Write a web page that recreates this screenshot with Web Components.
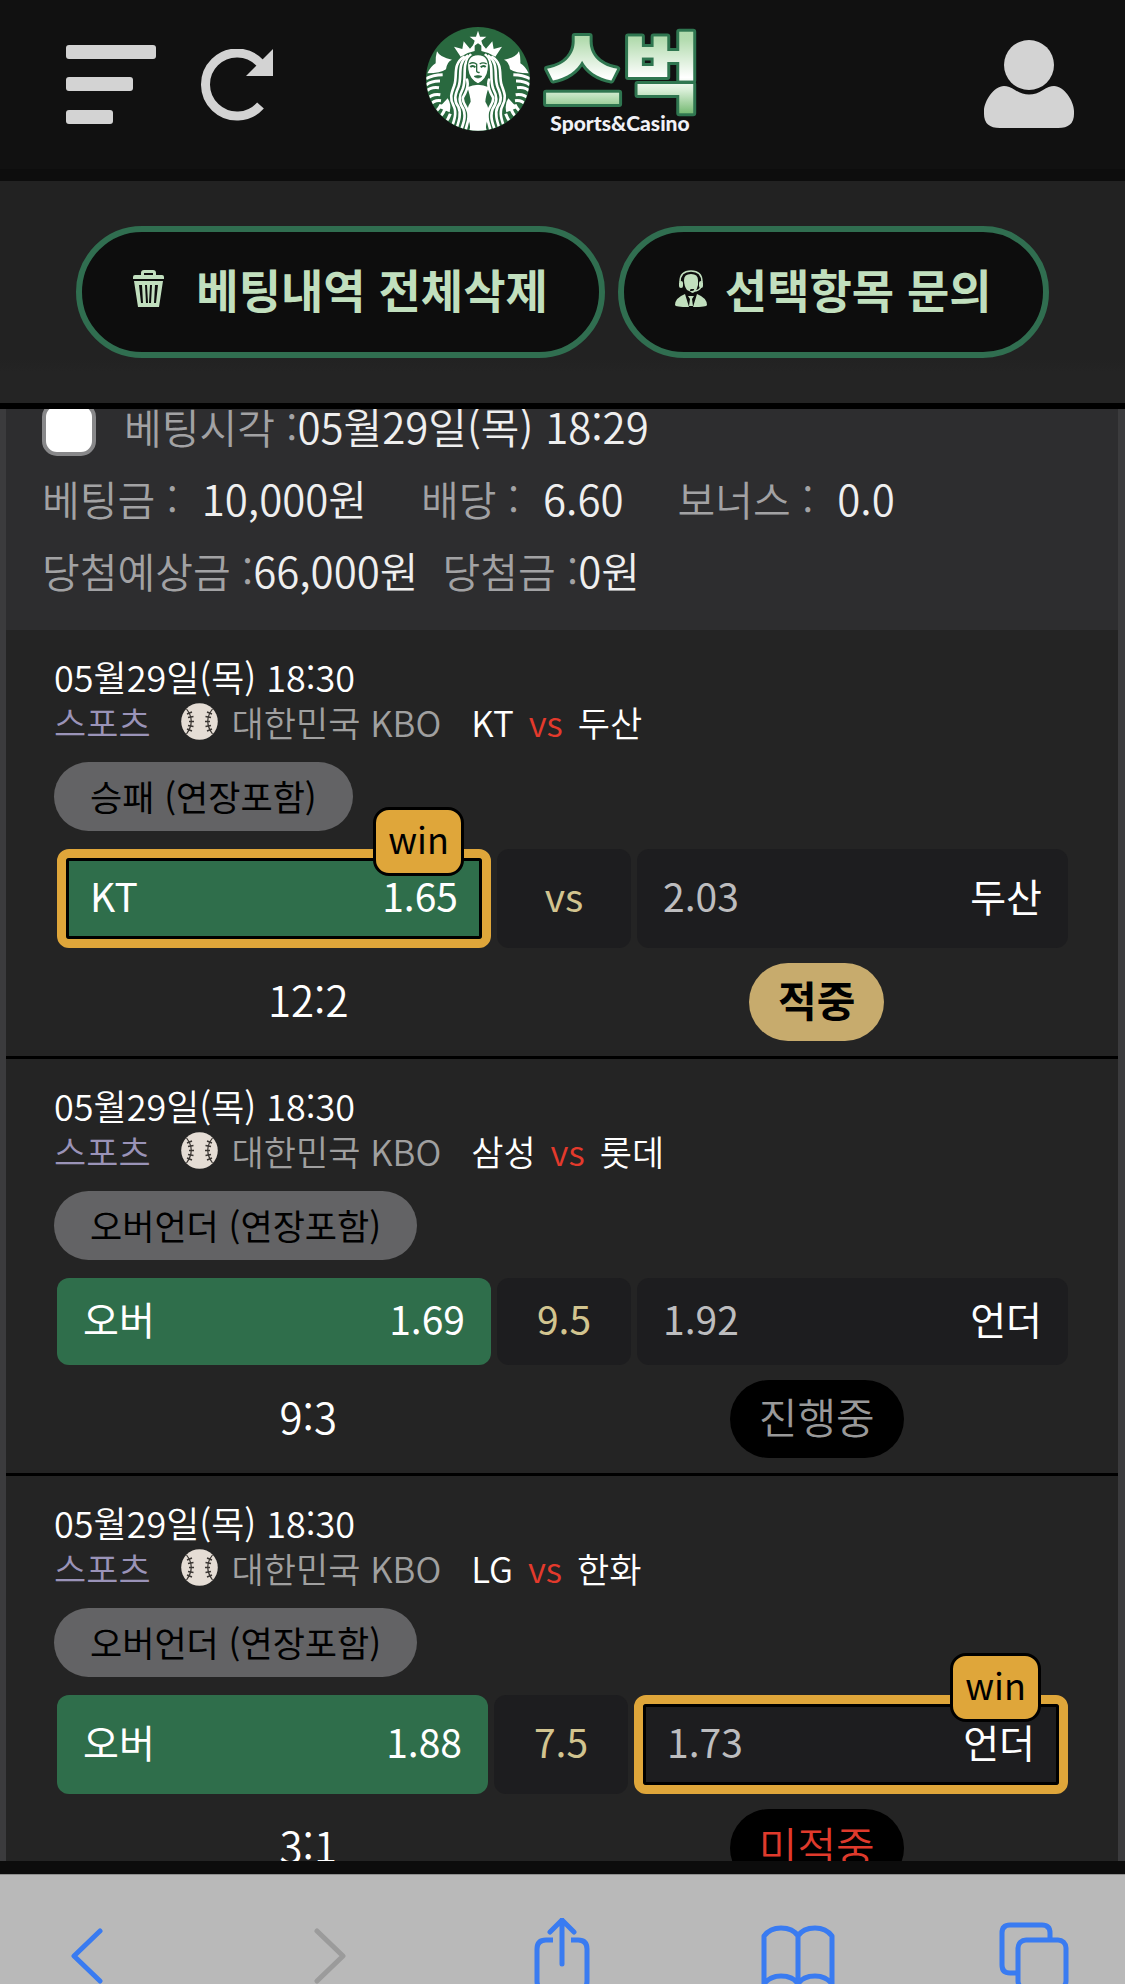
<!DOCTYPE html>
<html lang="ko">
<head>
<meta charset="utf-8">
<meta name="viewport" content="width=device-width, initial-scale=1">
<title>베팅내역</title>
<style>
  body { margin: 0; background: #222; color: #fff; font-family: "Noto Sans CJK KR", "Liberation Sans", sans-serif; }
</style>
</head>
<body>
<bet-app></bet-app>

<template id="t-app">
  <style>
    :host { display: flex; flex-direction: column; height: 100vh; overflow: hidden; background: #222; }
    .actions { display: flex; justify-content: center; gap: 13px; padding: 45px 0; border-bottom: 6px solid #000; background: linear-gradient(#222 0 80%, #242424 86%); flex: none; }
    main { flex: 1; min-height: 0; overflow: hidden; background: #3b3b3d; padding: 0 7px 0 6px; }
  </style>
  <app-header></app-header>
  <div class="actions">
    <pill-button icon="trash">베팅내역 전체삭제</pill-button>
    <pill-button icon="agent">선택항목 문의</pill-button>
  </div>
  <main>
    <bet-summary></bet-summary>
    <bet-match market="승패 (연장포함)" score="12:2" state="hit" status="적중" pick="home" winner="home"
      left="KT" left-odds="1.65" line="vs" right-odds="2.03" right="두산">
      <span slot="home">KT</span><span slot="away">두산</span>
    </bet-match>
    <bet-match market="오버언더 (연장포함)" score="9:3" state="open" status="진행중" pick="home"
      left="오버" left-odds="1.69" line="9.5" right-odds="1.92" right="언더">
      <span slot="home">삼성</span><span slot="away">롯데</span>
    </bet-match>
    <bet-match market="오버언더 (연장포함)" score="3:1" state="miss" status="미적중" pick="home" winner="away"
      left="오버" left-odds="1.88" line="7.5" right-odds="1.73" right="언더">
      <span slot="home">LG</span><span slot="away">한화</span>
    </bet-match>
  </main>
  <browser-bar></browser-bar>
</template>

<template id="t-header">
  <style>
    :host { display: grid; grid-template-columns: 1fr auto 1fr; align-items: center; flex: none; box-sizing: border-box; height: 181px; padding: 0 50px; background: #111; border-bottom: 12px solid #0d0d0d; }
    button { border: 0; background: none; padding: 0; display: block; }
    svg { display: block; }
    .tools { display: flex; gap: 45px; align-items: center; padding-left: 16px; }
    .user { justify-self: end; }
    .brand { display: flex; gap: 11px; align-items: center; text-decoration: none; padding-bottom: 11px; }
  </style>
  <div class="tools">
    <button aria-label="메뉴"><svg width="90" height="80" viewBox="0 0 90 80" fill="#d3d3d3"><rect width="90" height="14" rx="3"/><rect y="32" width="67" height="14" rx="3"/><rect y="65" width="47" height="14" rx="3"/></svg></button>
    <button aria-label="새로고침"><svg width="72" height="72" viewBox="0 0 72 72"><path d="M59.500 56.500A31.500 31.500 0 1 1 59 14" fill="none" stroke="#d3d3d3" stroke-width="9"/><path d="M72 0V27H45Z" fill="#d3d3d3"/></svg></button>
  </div>
  <a class="brand" href="#" aria-label="스벅">
    <svg width="104" height="104" viewBox="0 0 312 312">
      <defs>
        <clipPath id="disc"><circle cx="156" cy="156" r="155"/></clipPath>
        <g id="half">
          <path fill="#fff" d="M146 72Q124 76 104 89L84 59L109 66L113 43L132 65L146 49Z"/>
          <path fill="#fff" d="M33 73Q42 92 78 98Q63 104 60 127Q44 139 4 139Q14 118 29 109Q28 89 33 73Z"/>
          <g fill="none" stroke="#fff" stroke-width="9">
            <path d="M0 155Q20 144 50 143"/><path d="M0 174Q17 161 42 162"/><path d="M-2 196Q12 178 39 182"/><path d="M5 215Q18 199 43 203"/><path d="M12 235Q24 218 45 221"/>
            <path d="M25 258Q42 242 45 232" /><path d="M39 274Q52 260 58 245"/><path d="M57 289Q68 274 73 260"/>
          </g>
          <path fill="#fff" d="M65 214Q51 230 38 242L71 256Q77 231 65 214Z"/>
          <g fill="none" stroke="#fff" stroke-width="8" stroke-linecap="round">
            <path d="M113 90C79 112 95 146 85 175C76 199 70 214 83 237C93 257 85 280 77 302"/>
            <path d="M124 87C91 112 110 148 97 181C87 204 83 220 97 239C107 260 98 285 91 306"/>
            <path d="M133 84C104 114 124 152 110 186C97 211 99 226 112 246C121 268 112 290 104 312"/>
            <path d="M123 158C130 178 120 196 111 211C106 226 127 243 128 263C129 284 119 298 119 312"/>
          </g>
        </g>
      </defs>
      <circle cx="156" cy="156" r="156" fill="#29693f"/>
      <g clip-path="url(#disc)">
        <use href="#half"/><use href="#half" transform="translate(312 0) scale(-1 1)"/>
        <path fill="#fff" d="M156 11L162 29L181 29L166 41L172 60L156 49L140 60L146 41L131 29L150 29Z"/>
        <path fill="#fff" d="M124 181Q156 165 188 181Q179 208 178 224Q195 248 183 283Q177 301 183 312H129Q135 301 129 283Q117 248 134 224Q133 208 124 181Z"/>
        <path fill="#fff" stroke="#29693f" stroke-width="4" d="M156 83C183 83 190 102 187 127C184 151 171 164 156 171C141 164 128 151 125 127C122 102 129 83 156 83Z"/>
        <g fill="none" stroke="#29693f" stroke-width="4"><path d="M130 111Q142 103 152 112V133Q154 138 161 136M161 111Q171 104 182 111"/><path d="M133 120Q141 114 148 121M164 121Q172 114 179 120" stroke-width="6"/><path d="M144 148Q156 143 168 148Q156 158 144 148Z" fill="#29693f" stroke-width="2"/></g>
      </g>
    </svg>
    <svg width="158" height="114" viewBox="0 0 158 114">
      <defs>
        <linearGradient id="leaf" x1="0" y1="0" x2="0" y2="1"><stop offset="0" stop-color="#a5d49f"/><stop offset=".28" stop-color="#b4dcb0"/><stop offset=".58" stop-color="#fff"/><stop offset=".68" stop-color="#d9efd8"/><stop offset=".9" stop-color="#66b163"/></linearGradient>
      </defs>
      <text x="81" y="83" text-anchor="middle" font-family="Noto Sans CJK KR, sans-serif" font-weight="900" font-size="86" fill="url(#leaf)" stroke="#2f7650" stroke-width="6" stroke-linejoin="round" paint-order="stroke">스벅</text>
      <text x="79" y="109" text-anchor="middle" font-family="Lato, sans-serif" font-weight="900" font-size="21" fill="#f1f1f7">Sports&amp;Casino</text>
    </svg>
  </a>
  <button class="user" aria-label="내 정보"><svg width="91" height="90" viewBox="0 0 91 90" fill="#d3d3d3"><circle cx="45" cy="25" r="25"/><path d="M20 46Q25 46 31 50Q45 59 59 50Q65 46 70 46C80 46 90 61 90 71V74Q90 88 74 88H16Q0 88 0 74V71C0 61 10 46 20 46Z"/></svg></button>
</template>

<template id="t-pill-button">
  <style>
    :host { display: block; }
    button { display: flex; align-items: center; box-sizing: border-box; height: 132px; padding: 0 51px 8px; border: 6px solid #306e50; border-radius: 66px; background: #0d0d0d; color: #c1dfbe; font-family: inherit; font-size: 46px; line-height: 60px; font-weight: 700; white-space: nowrap; }
    svg { display: block; flex: none; fill: #c1dfbe; }
    :host([icon="trash"]) button { gap: 32px; }
    :host([icon="agent"]) button { gap: 18px; }
  </style>
  <button><span class="icon"></span><span><slot></slot></span></button>
</template>

<template id="t-summary">
  <style>
    :host { display: block; padding: 0 36px 24px; background: #2d2d2f; color: #a2a2a4; font-size: 41px; line-height: 72px; font-weight: 350; }
    .row { display: flex; white-space: pre; }
    b { font-size: 42px; font-weight: 350; color: #efefef; }
    label { display: flex; align-items: center; }
    input { appearance: none; box-sizing: border-box; width: 54px; height: 54px; margin: 6px 28px 0 0; border: 4px solid #88888a; border-radius: 15px; background: #fff; }
    .wide { gap: 54px; }
    .wide b { margin-left: 24px; }
    .tight { gap: 24px; }
  </style>
  <div class="row"><label><input type="checkbox">베팅시각 :</label><b>05월29일(목) 18:29</b></div>
  <div class="row wide"><span>베팅금 :<b>10,000원</b></span><span>배당 :<b>6.60</b></span><span>보너스 :<b>0.0</b></span></div>
  <div class="row tight"><span>당첨예상금 :<b>66,000원</b></span><span>당첨금 :<b>0원</b></span></div>
</template>

<template id="t-match">
  <style>
    :host { display: block; padding: 24px 47px 15px 48px; border-bottom: 3px solid #000; background: #242424; font-size: 36px; line-height: 45px; font-weight: 350; }
    .info { display: flex; align-items: center; white-space: nowrap; font-size: 35px; }
    .sport { color: #9a93b8; margin-right: 30px; }
    .ball { display: block; margin-right: 14px; }
    .league { color: #a0a0a0; margin-right: 30px; }
    .versus { color: #e43a2c; margin: 0 15px; }
    .market { display: inline-block; margin: 18px 0; padding: 0 36px; border-radius: 35px; background: #636365; color: #000; font-size: 35px; font-weight: 400; line-height: 67px; height: 69px; vertical-align: top; }
    .odds { display: grid; grid-template-columns: 434fr 134fr 431fr; gap: 6px; padding: 0 3px; font-size: 39px; font-weight: 400; line-height: 40px; }
    :host([winner="away"]) .odds { grid-template-columns: 431fr 134fr 434fr; }
    .cell { position: relative; display: flex; justify-content: space-between; align-items: center; box-sizing: border-box; min-height: 87px; padding: 0 26px 7px; border-radius: 12px; background: #1d1d1f; }
    :host([winner]) .cell { min-height: 99px; }
    .line { justify-content: center; color: #d2c48f; }
    .rate { color: #bdbdbf; }
    .picked { background: #2f6e4b; }
    .picked .rate { color: #fff; }
    .won { border: 9px solid #dfa63a; padding: 0 24px 7px; }
    .won::before { content: ""; position: absolute; inset: 0; border: 3px solid #000; border-radius: 3px; box-shadow: 0 0 0 2px #dfa63a; }
    .win { position: absolute; right: 18px; top: -51px; box-sizing: border-box; width: 91px; height: 69px; border: 3px solid #000; border-radius: 16px; background: #dfa63a; color: #000; text-align: center; line-height: 56px; font-size: 36px; }
    .result { display: grid; grid-template-columns: 1fr 1fr; justify-items: center; margin-top: 15px; font-size: 42px; line-height: 72px; height: 78px; }
    .status { height: 78px; padding: 0 29px; border-radius: 39px; background: #000; color: #999; }
    :host([state="hit"]) .status { background: #c7ab6d; color: #000; font-weight: 700; }
    :host([state="miss"]) .status { color: #df3a2c; }
  </style>
  <div>05월29일(목) 18:30</div>
  <div class="info">
    <span class="sport">스포츠</span>
    <svg class="ball" width="37" height="37" viewBox="0 0 37 37"><circle cx="18.500" cy="18.500" r="18.300" fill="#e5ddd5"/><g fill="none" stroke="#3a3633" stroke-width="1.200"><path d="M5.500 6Q15 18 5.500 31M31.500 6Q22 18 31.500 31"/><path stroke-width="1.500" d="M6 11L11 9M7 14.500L12.500 13.500M8 18.500H13M7 22.500L12.500 23.500M6 26L11 28M31 11L26 9M30 14.500L24.500 13.500M29 18.500H24M30 22.500L24.500 23.500M31 26L26 28"/></g></svg>
    <span class="league">대한민국 KBO</span>
    <slot name="home"></slot><span class="versus">vs</span><slot name="away"></slot>
  </div>
  <span class="market"></span>
  <div class="odds">
    <div class="cell home"><span class="name"></span><span class="rate"></span></div>
    <div class="cell line"></div>
    <div class="cell away"><span class="rate"></span><span class="name"></span></div>
  </div>
  <div class="result"><span class="score"></span><span class="status"></span></div>
</template>

<template id="t-bar">
  <style>
    :host { display: block; flex: none; height: 110px; box-sizing: border-box; border-top: 1px solid #8d8d8d; background: #b9b9b9; box-shadow: 0 -13px 0 #0c0c0c; margin-top: 13px; }
    nav { display: flex; justify-content: space-between; padding: 43px 52px 0 49px; height: 66px; overflow: hidden; }
    button { border: 0; background: none; padding: 0; display: block; width: 76px; height: 84px; }
    svg { display: block; margin: 0 auto; fill: none; stroke: #397bf1; stroke-width: 5; stroke-linecap: round; stroke-linejoin: round; }
    .off { stroke: #9b9b9b; }
  </style>
  <nav>
    <button aria-label="뒤로"><svg width="40" height="84" viewBox="0 0 40 84"><path d="M33 13L7 38L33 63"/></svg></button>
    <button aria-label="앞으로"><svg class="off" width="76" height="84" viewBox="0 0 76 84"><path d="M31 13L57 38L31 63"/></svg></button>
    <button aria-label="공유"><svg width="60" height="84" viewBox="0 0 60 84"><path d="M19 14L31 2L43 14M31 2V46"/><path stroke-linecap="butt" d="M22 22H15Q6 22 6 31V63Q6 72 15 72H47Q56 72 56 63V31Q56 22 47 22H40"/></svg></button>
    <button aria-label="책갈피"><svg width="76" height="84" viewBox="0 0 76 84"><path d="M38 18Q33 10 21 10Q10 10 4 18V66Q10 58 21 58Q33 58 38 66Q43 58 55 58Q66 58 72 66V18Q66 10 55 10Q43 10 38 18V66"/></svg></button>
    <button aria-label="탭"><svg width="72" height="84" viewBox="0 0 72 84"><path d="M18 55H11Q3 55 3 47V15Q3 7 11 7H43Q51 7 51 15V21"/><rect x="19" y="22" width="48" height="49" rx="8"/></svg></button>
  </nav>
</template>

<script>
  const ICONS = {
    trash: '<svg width="31" height="37" viewBox="0 0 31 37"><path fill-rule="evenodd" d="M8 5V3Q8 0 11 0H20Q23 0 23 3V5H29Q31 5 31 7V9H0V7Q0 5 2 5ZM11 5H20V3H11Z"/><path fill-rule="evenodd" d="M1 11H30L26 37H5ZM6 15L8 33H10L9 15ZM12 15L13 33H15L14 15ZM17 15L16 33H18L19 15ZM22 15L21 33H23L25 15Z"/></svg>',
    agent: '<svg width="32" height="37" viewBox="0 0 32 37"><path d="M9 10Q9 4 16 4Q23 4 23 10V15Q21 23 17 23L15 21Q20 21 19 19H16Q14 20 16 22L12 20Q9 16 9 10Z"/><path fill="none" stroke="#c1dfbe" stroke-width="1.500" d="M5 12Q5 1 16 1Q27 1 27 12M26 17Q24 21 19 21"/><rect x="4" y="11" width="4" height="7" rx="2"/><rect x="24" y="11" width="4" height="7" rx="2"/><path d="M10 24L14 37Q0 37 0 35Q0 28 10 24ZM22 24L18 37Q32 37 32 35Q32 28 22 24ZM13 26H19L17 29L18 36H14L15 29Z"/></svg>'
  };

  class TemplateElement extends HTMLElement {
    constructor() {
      super();
      const tpl = document.getElementById(this.constructor.template);
      this.attachShadow({ mode: 'open' }).append(tpl.content.cloneNode(true));
    }
    find(selector) { return this.shadowRoot.querySelector(selector); }
  }

  customElements.define('app-header', class extends TemplateElement { static template = 't-header'; });
  customElements.define('bet-summary', class extends TemplateElement { static template = 't-summary'; });
  customElements.define('browser-bar', class extends TemplateElement { static template = 't-bar'; });

  customElements.define('pill-button', class extends TemplateElement {
    static template = 't-pill-button';
    connectedCallback() { this.find('.icon').innerHTML = ICONS[this.getAttribute('icon')]; }
  });

  customElements.define('bet-match', class extends TemplateElement {
    static template = 't-match';
    connectedCallback() {
      const put = (selector, name) => { this.find(selector).textContent = this.getAttribute(name); };
      put('.market', 'market');
      put('.home .name', 'left');
      put('.home .rate', 'left-odds');
      put('.line', 'line');
      put('.away .rate', 'right-odds');
      put('.away .name', 'right');
      put('.score', 'score');
      put('.status', 'status');
      this.find('.' + this.getAttribute('pick')).classList.add('picked');
      const winner = this.getAttribute('winner');
      if (winner) {
        const cell = this.find('.' + winner);
        const badge = document.createElement('span');
        badge.className = 'win';
        badge.textContent = 'win';
        cell.classList.add('won');
        cell.append(badge);
      }
    }
  });

  customElements.define('bet-app', class extends TemplateElement {
    static template = 't-app';
    connectedCallback() { this.find('main').scrollTop = 19; }
  });
</script>
</body>
</html>
